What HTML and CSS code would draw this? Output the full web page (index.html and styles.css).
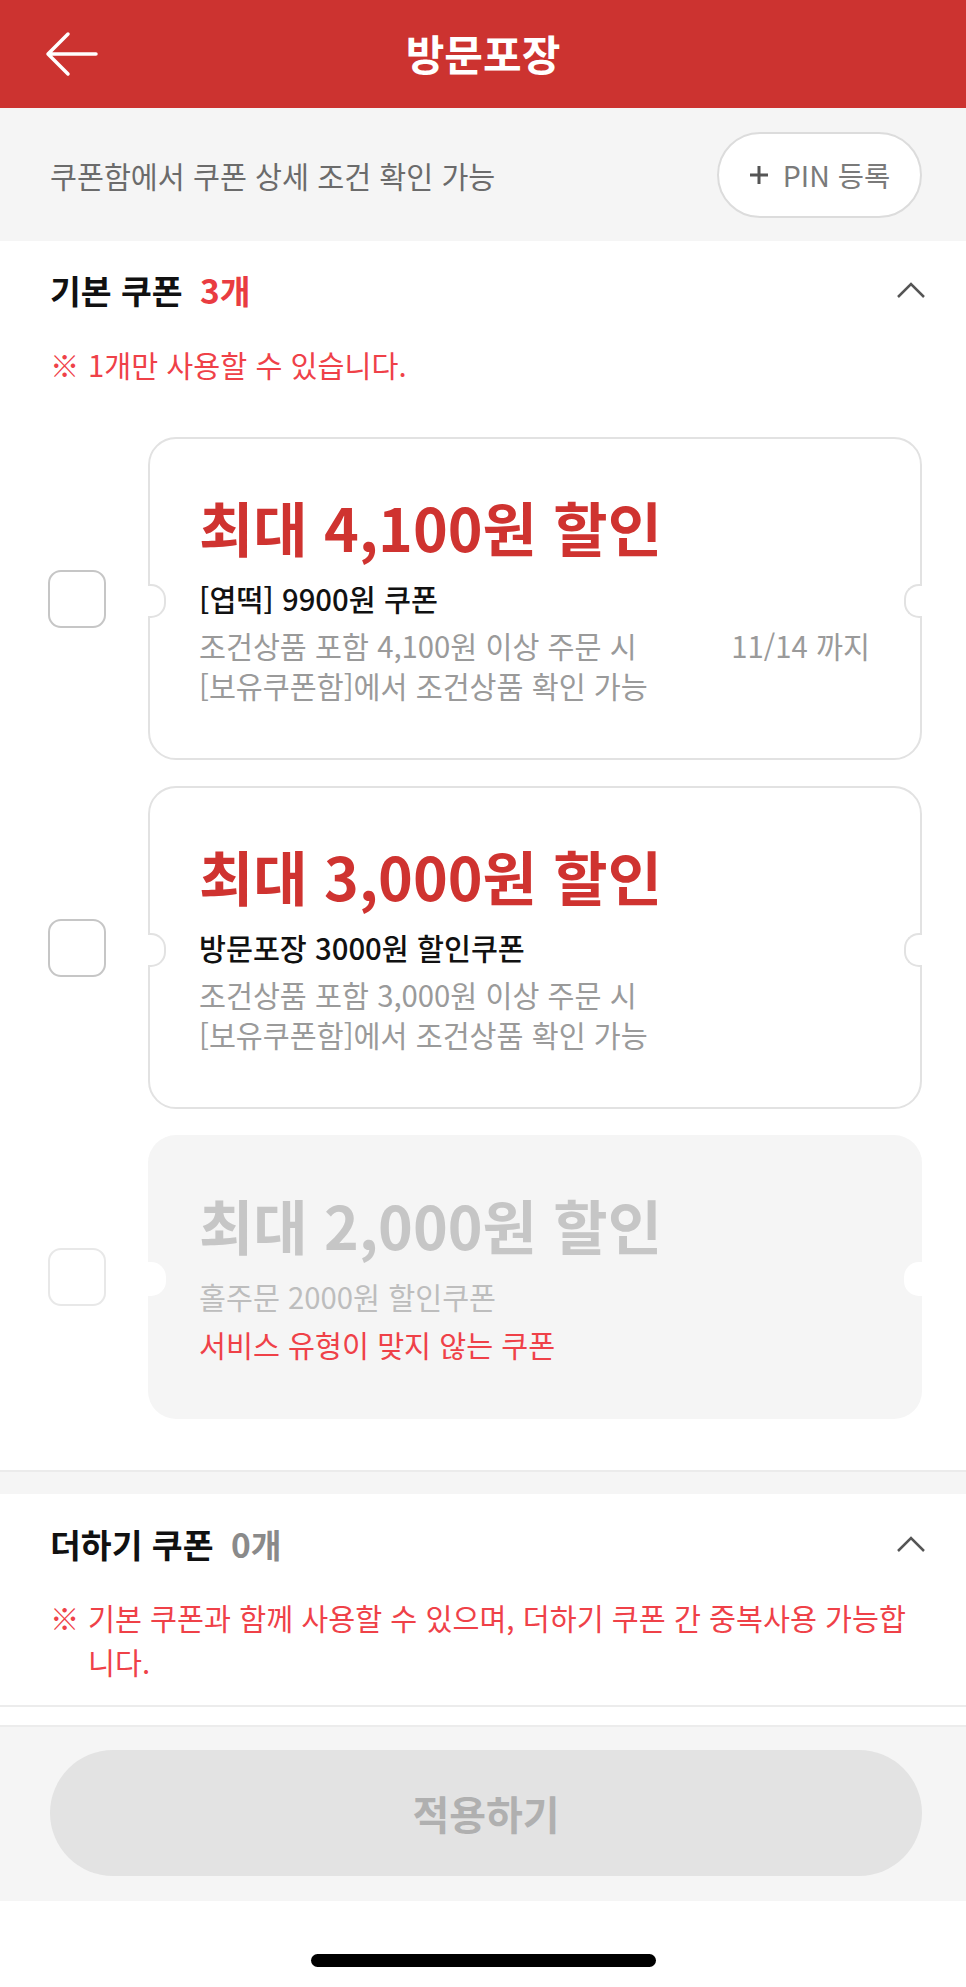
FILE: index.html
```html
<!DOCTYPE html>
<html lang="ko">
<head>
<meta charset="utf-8">
<title>방문포장</title>
<link rel="stylesheet" href="styles.css">
</head>
<body>
<header class="topbar">
  <button class="back" aria-label="뒤로">
    <svg width="56" height="46" viewBox="0 0 56 46"><path d="M4 23 H52 M24 3 L4 23 L24 43" fill="none" stroke="#fff" stroke-width="3.5" stroke-linecap="round" stroke-linejoin="round"/></svg>
  </button>
  <h1 class="title">방문포장</h1>
  <span></span>
</header>

<div class="infobar">
  <p class="info-text">쿠폰함에서 쿠폰 상세 조건 확인 가능</p>
  <button class="pin">
    <svg width="20" height="20" viewBox="0 0 20 20"><path d="M10 1 V19 M1 10 H19" stroke="#555" stroke-width="3"/></svg>
    <span>PIN 등록</span>
  </button>
</div>

<section class="group group-basic">
  <div class="group-head">
    <h2 class="group-title">기본 쿠폰 <span class="count count-red">3개</span></h2>
    <svg class="chev" width="30" height="18" viewBox="0 0 30 18"><path d="M2 16 L15 3 L28 16" fill="none" stroke="#555" stroke-width="2.5"/></svg>
  </div>
  <p class="notice"><span class="mark">※</span><span>1개만 사용할 수 있습니다.</span></p>

  <ul class="coupons">
    <li class="coupon-row">
      <span class="check"></span>
      <div class="coupon">
        <div class="c-title">최대 4,100원 할인</div>
        <div class="c-name">[엽떡] 9900원 쿠폰</div>
        <div class="c-desc-row">
          <div class="c-desc">조건상품 포함 4,100원 이상 주문 시<br>[보유쿠폰함]에서 조건상품 확인 가능</div>
          <div class="c-date">11/14 까지</div>
        </div>
      </div>
    </li>
    <li class="coupon-row">
      <span class="check"></span>
      <div class="coupon">
        <div class="c-title">최대 3,000원 할인</div>
        <div class="c-name">방문포장 3000원 할인쿠폰</div>
        <div class="c-desc-row">
          <div class="c-desc">조건상품 포함 3,000원 이상 주문 시<br>[보유쿠폰함]에서 조건상품 확인 가능</div>
        </div>
      </div>
    </li>
    <li class="coupon-row is-disabled">
      <span class="check"></span>
      <div class="coupon">
        <div class="c-title">최대 2,000원 할인</div>
        <div class="c-name">홀주문 2000원 할인쿠폰</div>
        <div class="c-warn">서비스 유형이 맞지 않는 쿠폰</div>
      </div>
    </li>
  </ul>
</section>

<div class="divider"></div>

<section class="group group-add">
  <div class="group-head">
    <h2 class="group-title">더하기 쿠폰 <span class="count count-gray">0개</span></h2>
    <svg class="chev" width="30" height="18" viewBox="0 0 30 18"><path d="M2 16 L15 3 L28 16" fill="none" stroke="#555" stroke-width="2.5"/></svg>
  </div>
  <p class="notice"><span class="mark">※</span><span>기본 쿠폰과 함께 사용할 수 있으며, 더하기 쿠폰 간 중복사용 가능합니다.</span></p>
</section>

<div class="spacer"></div>

<footer class="footer">
  <button class="apply">적용하기</button>
</footer>
<div class="home"><span class="indicator"></span></div>
</body>
</html>
```

FILE: styles.css
```css
* { box-sizing: border-box; }
html, body { margin: 0; padding: 0; }
body {
  width: 966px;
  background: #fff;
  font-family: "Noto Sans CJK KR", "Noto Sans", sans-serif;
  color: #111;
}
button { font-family: inherit; cursor: pointer; }

.topbar {
  height: 108px;
  background: #cc3330;
  display: grid;
  grid-template-columns: 1fr auto 1fr;
  align-items: center;
}
.back {
  justify-self: start;
  margin-left: 44px;
  padding: 0;
  border: 0;
  background: none;
  display: flex;
}
.title {
  margin: 0 0 2px;
  font-size: 42px;
  font-weight: 700;
  color: #fff;
  line-height: 1;
}

.infobar {
  height: 133px;
  background: #f5f5f5;
  display: flex;
  align-items: center;
  justify-content: space-between;
  padding: 0 44px 0 50px;
}
.info-text {
  margin: 0;
  font-size: 29.3px;
  color: #6b6b6b;
}
.pin {
  width: 205px;
  height: 86px;
  border: 2px solid #dcdcdc;
  border-radius: 43px;
  background: #fff;
  display: flex;
  align-items: center;
  justify-content: center;
  gap: 14px;
  font-size: 28.5px;
  color: #7a7a7a;
  padding: 0;
}

.group { padding: 27px 0 51px; }
.group-add { padding: 28px 0 22px; border-bottom: 2px solid #ececec; }
.group-head {
  display: flex;
  align-items: center;
  justify-content: space-between;
  padding: 0 40px 0 50px;
  height: 44px;
}
.group-title {
  margin: 0;
  font-size: 33.5px;
  font-weight: 700;
  line-height: 44px;
  color: #111;
}
.count { margin-left: 8px; }
.count-red { color: #e93c41; }
.count-gray { color: #8a8a8a; }

.notice {
  margin: 30px 0 0;
  padding: 0 40px 0 50px;
  display: flex;
  gap: 9px;
  font-size: 29.3px;
  line-height: 44px;
  color: #ef4148;
}
.group-add .notice { margin-top: 29px; }
.mark { flex: none; width: 29px; }

.coupons {
  list-style: none;
  margin: 51px 0 0;
  padding: 0 44px 0 48px;
  display: flex;
  flex-direction: column;
  gap: 26px;
}
.coupon-row {
  display: flex;
  align-items: center;
  gap: 42px;
}
.check {
  flex: none;
  width: 58px;
  height: 58px;
  border: 2px solid #c6c6c6;
  border-radius: 13px;
  background: #fff;
}
.coupon {
  flex: 1;
  position: relative;
  border: 2px solid #e2e2e2;
  border-radius: 28px;
  background: #fff;
  padding: 56px 50px 53px 49px;
}
.coupon::before,
.coupon::after {
  content: "";
  position: absolute;
  top: 50%;
  width: 16px;
  height: 30px;
  margin-top: -15px;
  background: #fff;
  border: 2px solid #e2e2e2;
}
.coupon::before {
  left: -2px;
  border-left: 0;
  border-radius: 0 15px 15px 0;
}
.coupon::after {
  right: -2px;
  border-right: 0;
  border-radius: 15px 0 0 15px;
}
.c-title {
  font-size: 59px;
  font-weight: 700;
  line-height: 64px;
  color: #cf3330;
  white-space: nowrap;
}
.c-name {
  margin-top: 19px;
  font-size: 29.3px;
  font-weight: 500;
  line-height: 40px;
  color: #111;
}
.c-desc-row {
  margin-top: 7px;
  display: flex;
  justify-content: space-between;
  align-items: flex-start;
}
.c-desc, .c-date {
  font-size: 29.3px;
  line-height: 40px;
  color: #9a9a9a;
}
.c-warn {
  margin-top: 8px;
  font-size: 29.3px;
  line-height: 40px;
  color: #ef4148;
}

.is-disabled .check { border-color: #e8e8e8; }
.is-disabled .coupon {
  background: #f5f5f5;
  border-color: transparent;
}
.is-disabled .coupon::before,
.is-disabled .coupon::after { border-color: transparent; }
.is-disabled .c-title { color: #c6c6c6; }
.is-disabled .c-name { color: #bdbdbd; font-weight: 400; }

.divider {
  height: 24px;
  background: #f5f5f5;
  border-top: 2px solid #ebebeb;
}

.spacer { height: 18px; }

.footer {
  background: #f5f5f5;
  border-top: 2px solid #ececec;
  padding: 23px 44px 25px 50px;
}
.apply {
  display: block;
  width: 100%;
  height: 126px;
  border: 0;
  border-radius: 63px;
  background: #e3e3e3;
  font-size: 40px;
  font-weight: 700;
  color: #b0b0b0;
}

.home {
  height: 83px;
  padding-top: 53px;
  display: flex;
  justify-content: center;
}
.indicator {
  width: 345px;
  height: 13px;
  border-radius: 7px;
  background: #000;
}
```
